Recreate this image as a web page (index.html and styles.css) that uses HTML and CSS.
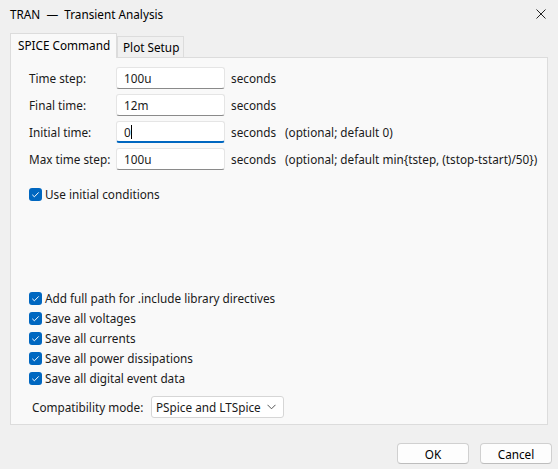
FILE: index.html
```html
<!DOCTYPE html>
<html>
<head>
<meta charset="utf-8">
<link rel="stylesheet" href="styles.css">
</head>
<body>
<div class="window">
  <div class="titlebar">
    <span class="title">TRAN &nbsp;— &nbsp;Transient Analysis</span>
    <svg class="close" width="10" height="10" viewBox="0 0 10 10"><path d="M0.5 0.5 L9.5 9.5 M9.5 0.5 L0.5 9.5" stroke="#222" stroke-width="1" fill="none"/></svg>
  </div>
  <div class="tabs">
    <div class="tab active">SPICE Command</div>
    <div class="tab">Plot Setup</div>
  </div>
  <div class="panel">
    <div class="fields">
      <div class="row">
        <span class="label">Time step:</span>
        <div class="input">100u</div>
        <span class="unit">seconds</span>
        <span class="note"></span>
      </div>
      <div class="row">
        <span class="label">Final time:</span>
        <div class="input">12m</div>
        <span class="unit">seconds</span>
        <span class="note"></span>
      </div>
      <div class="row">
        <span class="label">Initial time:</span>
        <div class="input focused">0<span class="caret"></span></div>
        <span class="unit">seconds</span>
        <span class="note">(optional; default 0)</span>
      </div>
      <div class="row">
        <span class="label">Max time step:</span>
        <div class="input">100u</div>
        <span class="unit">seconds</span>
        <span class="note">(optional; default min{tstep, (tstop-tstart)/50})</span>
      </div>
    </div>
    <div class="check first"><span class="box"><svg width="13" height="13" viewBox="0 0 13 13"><path d="M3.3 6.8 L5.4 8.8 L9.7 4.4" stroke="#fff" stroke-width="1" fill="none"/></svg></span>Use initial conditions</div>
    <div class="checks">
      <div class="check"><span class="box"><svg width="13" height="13" viewBox="0 0 13 13"><path d="M3.3 6.8 L5.4 8.8 L9.7 4.4" stroke="#fff" stroke-width="1" fill="none"/></svg></span>Add full path for .include library directives</div>
      <div class="check"><span class="box"><svg width="13" height="13" viewBox="0 0 13 13"><path d="M3.3 6.8 L5.4 8.8 L9.7 4.4" stroke="#fff" stroke-width="1" fill="none"/></svg></span>Save all voltages</div>
      <div class="check"><span class="box"><svg width="13" height="13" viewBox="0 0 13 13"><path d="M3.3 6.8 L5.4 8.8 L9.7 4.4" stroke="#fff" stroke-width="1" fill="none"/></svg></span>Save all currents</div>
      <div class="check"><span class="box"><svg width="13" height="13" viewBox="0 0 13 13"><path d="M3.3 6.8 L5.4 8.8 L9.7 4.4" stroke="#fff" stroke-width="1" fill="none"/></svg></span>Save all power dissipations</div>
      <div class="check"><span class="box"><svg width="13" height="13" viewBox="0 0 13 13"><path d="M3.3 6.8 L5.4 8.8 L9.7 4.4" stroke="#fff" stroke-width="1" fill="none"/></svg></span>Save all digital event data</div>
    </div>
    <div class="compat">
      <span class="compat-label">Compatibility mode:</span>
      <div class="select"><span>PSpice and LTSpice</span><svg width="9" height="6" viewBox="0 0 9 6"><path d="M0.5 0.8 L4.5 4.8 L8.5 0.8" stroke="#555" stroke-width="1" fill="none"/></svg></div>
    </div>
  </div>
  <div class="footer">
    <div class="btn">OK</div>
    <div class="btn">Cancel</div>
  </div>
</div>
</body>
</html>
```
FILE: styles.css
```css
* { box-sizing: border-box; }
html, body { margin: 0; padding: 0; }
body {
  width: 558px;
  height: 469px;
  background: #f0f0f0;
  font-family: "Noto Sans", "Segoe UI", sans-serif;
  font-size: 11.75px;
  color: #1a1a1a;
  overflow: hidden;
}
.window { display: flex; flex-direction: column; height: 469px; }
.titlebar {
  height: 28px;
  display: flex;
  align-items: center;
  justify-content: space-between;
  padding: 0 7px 0 10px;
  background: #f0f0f0;
  color: #000;
}
.close { margin-top: -1px; margin-right: 5px; }
.tabs {
  display: flex;
  align-items: flex-end;
  margin: 5px 0 0 10px;
  height: 24px;
  position: relative;
  z-index: 1;
}
.tab {
  height: 21px;
  padding: 0 4px 0 5px;
  border: 1px solid #dcdcdc;
  border-bottom: none;
  background: #f0f0f0;
  display: flex;
  align-items: center;
  color: #000;
  white-space: nowrap;
}
.tab.active {
  height: 25px;
  margin-bottom: -1px;
  padding: 0 7px 3px 7px;
  background: #f9f9f9;
  width: 107px;
}
.panel {
  margin: 0 10px;
  height: 368px;
  background: #f9f9f9;
  border: 1px solid #dcdcdc;
  padding: 9px 0 0 18px;
  display: flex;
  flex-direction: column;
}
.fields { display: flex; flex-direction: column; gap: 5px; }
.row { display: flex; align-items: center; height: 22px; white-space: nowrap; }
.label { width: 87px; }
.input {
  width: 109px;
  height: 22px;
  background: #fff;
  border: 1px solid #e5e5e5;
  border-bottom: 1px solid #8a8a8a;
  border-radius: 3px;
  padding: 0 0 1px 7px;
  display: flex;
  align-items: center;
}
.input.focused { border-bottom: 2px solid #0067c0; padding-bottom: 0; }
.caret { display: inline-block; width: 1px; height: 14px; background: #000; }
.unit { margin-left: 6px; width: 54px; }
.check { display: flex; align-items: center; height: 20px; gap: 3px; white-space: nowrap; }
.check.first { margin-top: 14px; }
.box {
  width: 13px;
  height: 13px;
  border-radius: 3px;
  background: #0067c0;
  display: flex;
}
.checks { margin-top: 84px; display: flex; flex-direction: column; }
.compat { display: flex; align-items: center; margin-top: 8px; height: 22px; padding-left: 3px; }
.compat-label { width: 119px; }
.select {
  width: 133px;
  height: 22px;
  border: 1px solid #d6d6d6;
  border-radius: 3px;
  background: #fff;
  display: flex;
  align-items: center;
  justify-content: space-between;
  padding: 0 7px 0 4px;
}
.footer { display: flex; justify-content: flex-end; gap: 11px; padding: 18px 6px 0 0; }
.btn {
  width: 72px;
  height: 21px;
  border: 1px solid #d0d0d0;
  border-bottom-color: #bdbdbd;
  border-radius: 4px;
  background: #fdfdfd;
  display: flex;
  align-items: center;
  justify-content: center;
  color: #000;
}
```
